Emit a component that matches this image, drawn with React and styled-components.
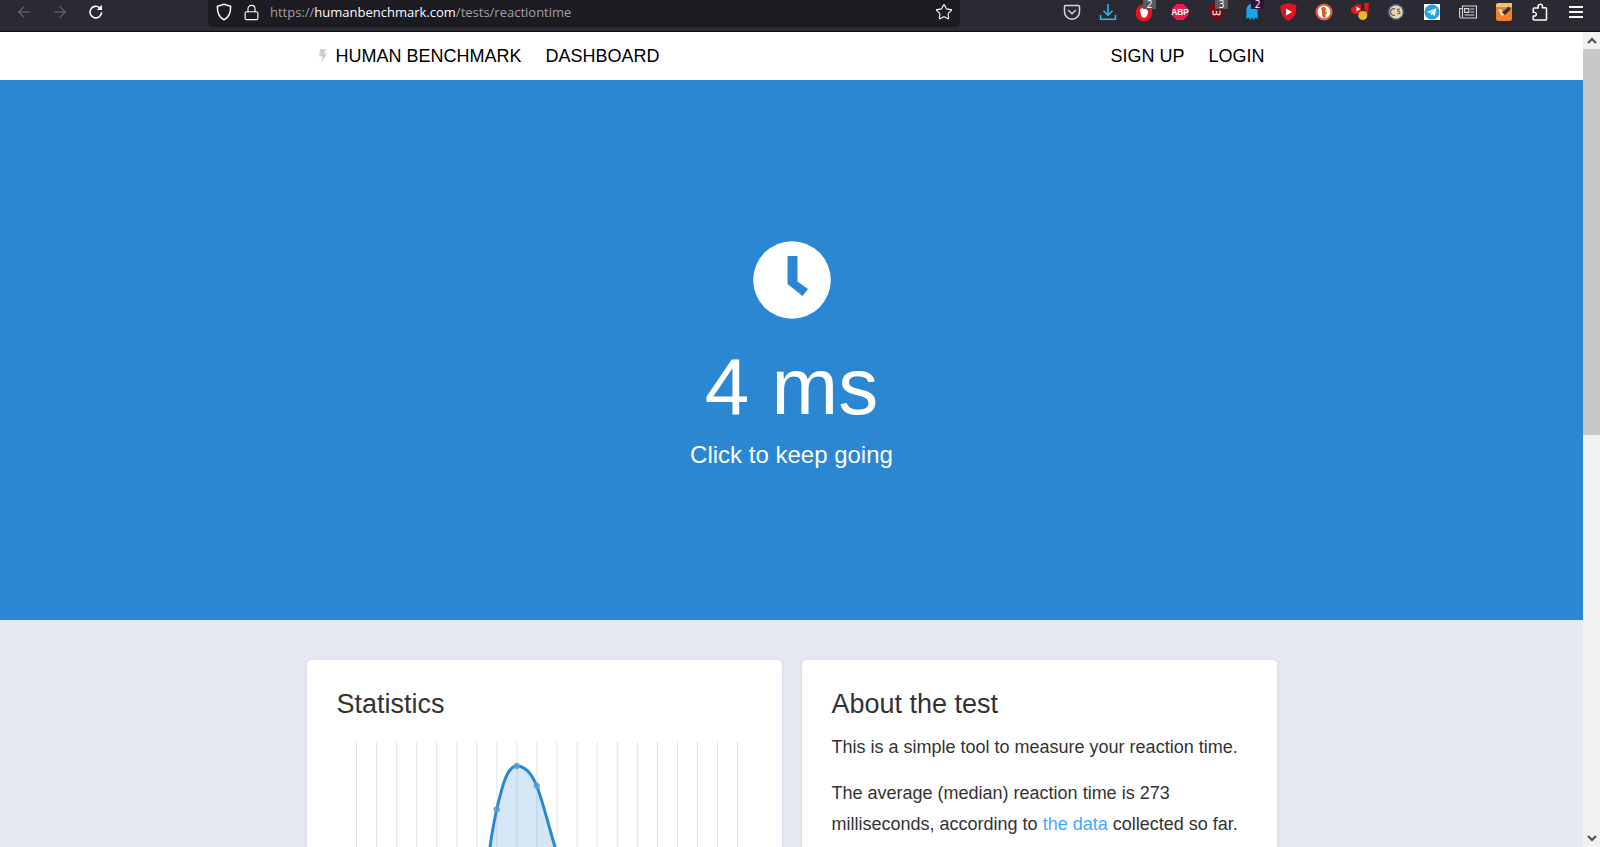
import React from 'react'
import styled, { createGlobalStyle } from 'styled-components'
import { ArrowLeft, ArrowRight, Lock, Star } from 'lucide-react'

const GlobalStyle = createGlobalStyle`
  html, body {
    margin: 0;
    padding: 0;
    height: 100%;
    overflow: hidden;
  }
  body {
    font-family: "Liberation Sans", Arial, sans-serif;
    color: #333;
    background: #e6e8f4;
  }
`

const gridLines = Array.from({ length: 20 }, (_, i) => 19.5 + i * 20.06)
const curve =
  'M125,290 C135,220 146,150 153,105 C155,90 157,80 159.7,67.3 C165,45 170,24 179.7,24 C188,24 194,30 199.7,43.7 C206,60 212,85 218,105 C224,125 232,160 240,190 C250,225 262,262 275,290'

const App = () => {
  return (
    <Screen>
      <GlobalStyle />
      <BrowserBar>
        <NavButton $dim><ArrowLeft size={18} strokeWidth={1.4} /></NavButton>
        <NavButton $dim><ArrowRight size={18} strokeWidth={1.4} /></NavButton>
        <NavButton>
          <svg width='18' height='18' viewBox='0 0 18 18' fill='none' stroke='#fbfbfe' strokeWidth='1.6'>
            <path d='M14.6 9.4a5.8 5.8 0 1 1-1.9-4.6L14.6 6.6' />
            <path d='M15 1.8v5.2h-5.2z' fill='#fbfbfe' stroke='none' />
          </svg>
        </NavButton>
        <UrlBar>
          <ShieldIcon viewBox='0 0 16 18' fill='none' stroke='#fbfbfe' strokeWidth='1.5'>
            <path d='M8 1.2 14.6 3.4C14.8 9.5 13 14.4 8 16.8 3 14.4 1.2 9.5 1.4 3.4z' />
          </ShieldIcon>
          <LockSlot><Lock size={17} strokeWidth={1.6} color='#fbfbfe' /></LockSlot>
          <UrlText>
            https://<strong>humanbenchmark.com</strong>/tests/reactiontime
          </UrlText>
          <StarSlot><Star size={18} strokeWidth={1.5} color='#fbfbfe' /></StarSlot>
        </UrlBar>
        <Extensions>
          <ExtSlot>
            <svg width='18' height='18' viewBox='0 0 18 18' fill='none' stroke='#d8d8dc' strokeWidth='1.5'>
              <path d='M2.5 2.5h13a1.2 1.2 0 0 1 1 1.2v5a7.5 7.5 0 0 1-15 0v-5a1.2 1.2 0 0 1 1-1.2z' />
              <path d='M5.5 7.5 9 10.8l3.5-3.3' strokeLinecap='round' />
            </svg>
          </ExtSlot>
          <ExtSlot>
            <svg width='18' height='18' viewBox='0 0 18 18' fill='none' stroke='#1fc5e6' strokeWidth='1.5'>
              <path d='M9 1v11M4.5 7.8 9 12.2l4.5-4.4M1.5 12v4.3h15V12' />
            </svg>
          </ExtSlot>
          <ExtSlot>
            <svg width='18' height='20' viewBox='0 0 18 20'>
              <circle cx='9' cy='11' r='8.4' fill='#e8141c' />
              <path d='M5 8l1 5c.6 2.6 3.6 3.8 5.6 1.4 1-1.3 1.4-3.4 1.4-5.4L11 7 9.5 5.5 7 6z' fill='#fff' />
            </svg>
            <Badge $bg='#5b5b5b'>2</Badge>
          </ExtSlot>
          <ExtSlot>
            <svg width='18' height='18' viewBox='0 0 18 18'>
              <path d='M5.4 1h7.2L17 5.4v7.2L12.6 17H5.4L1 12.6V5.4z' fill='#ec1c4a' />
              <AbpText x='9' y='12'>ABP</AbpText>
            </svg>
          </ExtSlot>
          <ExtSlot>
            <svg width='17' height='20' viewBox='0 0 17 20'>
              <path d='M8.5 1 16 3.4C16.4 11 14 16.6 8.5 19 3 16.6.6 11 1 3.4z' fill='#7c0a12' />
              <path d='M5 8.5v3.2c0 1.4 2.4 1.4 3.5 0 1.1 1.4 3.5 1.4 3.5 0V8.5M8.5 9v2.6' fill='none' stroke='#f3d2d2' strokeWidth='1.3' />
            </svg>
            <Badge $bg='#5b5b5b'>3</Badge>
          </ExtSlot>
          <ExtSlot>
            <svg width='14' height='20' viewBox='0 0 14 20'>
              <path d='M7 2C3 2 1.4 5.5 1.4 9v8l2.2-1.6L5.4 18 7 15.6 8.6 18l1.8-2.6 2.2 1.6V9C12.6 5.5 11 2 7 2z' fill='#14a8ec' />
            </svg>
            <Badge $bg='#35103f'>2</Badge>
          </ExtSlot>
          <ExtSlot>
            <svg width='17' height='20' viewBox='0 0 17 20'>
              <path d='M8.5 1 16.4 3.4C16.8 11 14 16.6 8.5 19 3 16.6.2 11 .6 3.4z' fill='#e2131e' />
              <path d='M6 6.4 12.2 10 6 13.6z' fill='#fff' />
            </svg>
          </ExtSlot>
          <ExtSlot>
            <svg width='18' height='18' viewBox='0 0 18 18'>
              <circle cx='9' cy='9' r='8.6' fill='#de5833' />
              <circle cx='9' cy='9' r='6.4' fill='#fff' />
              <path d='M6 5c2-1.6 4.4-1 5 .8l-.4 9.2c-2.4 0-3.6-1-3.6-3.4C7 9.5 7.2 7 6 5z' fill='#de5833' />
              <path d='M9 9.8l3-.8v1.8l-3 .2z' fill='#4cba3c' />
              <circle cx='11.2' cy='7.4' r='1.1' fill='#fddb1f' />
            </svg>
          </ExtSlot>
          <ExtSlot>
            <svg width='20' height='20' viewBox='0 0 20 20'>
              <path d='M1 6.5 6 2.5h5v9.5H4L1 9z' fill='#e8141c' />
              <path d='M14 1h5l-1 11h-3z' fill='#e8141c' />
              <path d='M6.5 4.6 10.4 7l-3.9 2.4z' fill='#fff' />
              <circle cx='12.8' cy='13.5' r='4.5' fill='#f3b71d' />
            </svg>
          </ExtSlot>
          <ExtSlot>
            <svg width='18' height='18' viewBox='0 0 18 18'>
              <circle cx='9' cy='9' r='8.4' fill='#35506a' />
              <circle cx='9' cy='9' r='6.8' fill='#e5d6b6' />
              <path d='M8 5.8a3.4 3.4 0 1 0 0 6.4' fill='none' stroke='#6a5b3c' strokeWidth='1.3' />
              <path d='M13 6.4c-2-1-3.2.2-2 1.4l1.4 1c1.2 1.2 0 2.6-2 1.6' fill='none' stroke='#6a5b3c' strokeWidth='1.1' />
            </svg>
          </ExtSlot>
          <ExtSlot>
            <svg width='16' height='16' viewBox='0 0 16 16'>
              <rect width='16' height='16' fill='#fff' />
              <circle cx='8' cy='8' r='7.6' fill='#2aa1da' />
              <path d='M3 8 12.4 4.2 10.8 12 8.2 10 7 11.4 6.6 9.2 10.6 5.8 5.4 9z' fill='#fff' />
            </svg>
          </ExtSlot>
          <ExtSlot>
            <svg width='18' height='16' viewBox='0 0 18 16' fill='none' stroke='#d8d8dc' strokeWidth='1.1'>
              <path d='M3.5 2h14v12H2a1.4 1.4 0 0 1-1.4-1.4V4.5H3.5z' />
              <path d='M3.5 4.5V13' />
              <path d='M5.6 4.6h4.2v3.8H5.6zM11.4 5h4M11.4 8h4M5.6 11h9.8' />
            </svg>
          </ExtSlot>
          <ExtSlot>
            <svg width='16' height='18' viewBox='0 0 16 18'>
              <rect width='16' height='18' rx='2.5' fill='#f0812d' />
              <path d='M0 4h16V0H2.5A2.5 2.5 0 0 0 0 2.5z' fill='#f5c06a' />
              <path d='M2 7l4 6 2-1.5-3-5.5z' fill='#f8e4d2' />
              <path d='M6 9.5 12.5 3.6 15 6 9 12z' fill='#3a3026' />
            </svg>
          </ExtSlot>
          <ExtSlot>
            <svg width='16' height='18' viewBox='0 0 16 18' fill='none' stroke='#fbfbfe' strokeWidth='1.5' strokeLinejoin='round'>
              <path d='M6 3.8C5.6 1.2 9.6.4 10.4 2.6c.3.9 0 1.6-.2 2.2h3.3c.6 0 1 .4 1 1v10.4c0 .5-.4.9-1 .9H2.2c-.6 0-1-.4-1-1V13c1.2.2 3 .2 3.2-1.6.2-1.8-2-2.4-3.2-2V6c0-.6.4-1.1 1-1.1h4.2c0-.4-.3-.7-.4-1.1z' />
            </svg>
          </ExtSlot>
          <ExtSlot>
            <MenuLines><i /><i /><i /></MenuLines>
          </ExtSlot>
        </Extensions>
      </BrowserBar>
      <Viewport>
        <Page>
          <TopNav>
            <NavInner>
              <NavGroup>
                <BrandLink>
                  <svg width='8' height='14' viewBox='0 0 8 14'>
                    <path d='M1 0h6L5.4 4.8H8L2.2 14l1.2-6.6H0z' fill='#cfcfcf' />
                  </svg>
                  HUMAN BENCHMARK
                </BrandLink>
                <NavLink>DASHBOARD</NavLink>
              </NavGroup>
              <NavGroup>
                <NavLink>SIGN UP</NavLink>
                <NavLink>LOGIN</NavLink>
              </NavGroup>
            </NavInner>
          </TopNav>
          <Hero>
            <svg width='78' height='78' viewBox='0 0 78 78'>
              <circle cx='39' cy='39' r='38.8' fill='#fff' />
              <path d='M34.5 16a1 1 0 0 1 1-1h8a1 1 0 0 1 1 1v24.5L55 48l-5.5 7-15-12z' fill='#2b87d1' />
            </svg>
            <Result>4 ms</Result>
            <HeroHint>Click to keep going</HeroHint>
          </Hero>
          <Cards>
            <Card>
              <CardTitle>Statistics</CardTitle>
              <Chart width='415' height='300' viewBox='0 0 415 300'>
                {gridLines.map((x) => (
                  <line key={x} x1={x} x2={x} y1='0' y2='300' stroke='#e2e2e2' strokeWidth='1' />
                ))}
                <path d={curve} fill='rgba(43,135,209,0.2)' stroke='#2b87d1' strokeWidth='3' />
                {[[159.7, 67.3], [179.7, 24], [199.7, 43.7]].map(([cx, cy]) => (
                  <circle key={cx} cx={cx} cy={cy} r='2.8' fill='rgba(90,163,220,0.7)' stroke='#5aa3dc' strokeWidth='1' />
                ))}
              </Chart>
            </Card>
            <Card>
              <CardTitle>About the test</CardTitle>
              <Text>This is a simple tool to measure your reaction time.</Text>
              <Text>
                The average (median) reaction time is 273 milliseconds, according to{' '}
                <DataLink>the data</DataLink> collected so far.
              </Text>
              <Text>
                In addition to measuring your reaction time, this test is affected by the latency of your computer and monitor.
              </Text>
            </Card>
          </Cards>
        </Page>
        <Scrollbar>
          <ScrollButton>
            <svg width='10' height='7' viewBox='0 0 10 7' fill='none' stroke='#505050' strokeWidth='2.2'>
              <path d='M1 6l4-4 4 4' />
            </svg>
          </ScrollButton>
          <ScrollThumb />
          <ScrollTrack />
          <ScrollButton>
            <svg width='10' height='7' viewBox='0 0 10 7' fill='none' stroke='#505050' strokeWidth='2.2'>
              <path d='M1 1l4 4 4-4' />
            </svg>
          </ScrollButton>
        </Scrollbar>
      </Viewport>
    </Screen>
  )
}

const Screen = styled.div`
  height: 100vh;
  display: flex;
  flex-direction: column;
  overflow: hidden;
`
const BrowserBar = styled.header`
  flex: none;
  height: 31px;
  box-sizing: content-box;
  display: flex;
  align-items: flex-start;
  padding-left: 6px;
  padding-right: 6px;
  background: #2b2a33;
  border-bottom: 1px solid #0c0c0d;
`
const NavButton = styled.div`
  width: 36px;
  height: 24px;
  display: flex;
  align-items: center;
  justify-content: center;
  color: ${(props) => (props.$dim ? '#77767c' : '#fbfbfe')};
`
const UrlBar = styled.div`
  width: 752px;
  height: 27px;
  margin-left: 94px;
  padding: 0 0 3px 8px;
  box-sizing: border-box;
  display: flex;
  align-items: center;
  background: #1c1b22;
  border-radius: 0 0 5px 5px;
`
const ShieldIcon = styled.svg`
  width: 16px;
  height: 18px;
  flex: none;
`
const LockSlot = styled.div`
  margin-left: 11px;
  display: flex;
`
const UrlText = styled.div`
  margin-left: 10px;
  font-family: "Open Sans", sans-serif;
  font-size: 13px;
  color: #a09fa6;
  strong {
    font-weight: 400;
    color: #fbfbfe;
  }
`
const StarSlot = styled.div`
  margin-left: auto;
  margin-right: 7px;
  display: flex;
`
const Extensions = styled.div`
  margin-left: auto;
  display: flex;
`
const ExtSlot = styled.div`
  position: relative;
  width: 36px;
  height: 24px;
  display: flex;
  align-items: center;
  justify-content: center;
`
const Badge = styled.span`
  position: absolute;
  top: 0;
  left: 17px;
  width: 13px;
  height: 9px;
  font-family: "Open Sans", sans-serif;
  font-size: 10px;
  line-height: 9px;
  text-align: center;
  color: #fff;
  background: ${(props) => props.$bg};
`
const AbpText = styled.text`
  font-family: "Liberation Sans", sans-serif;
  font-size: 8.4px;
  font-weight: 700;
  text-anchor: middle;
  fill: #fff;
`
const MenuLines = styled.div`
  width: 14px;
  display: flex;
  flex-direction: column;
  gap: 3px;
  i {
    display: block;
    height: 2px;
    background: #fbfbfe;
  }
`
const Viewport = styled.div`
  flex: 1;
  min-height: 0;
  display: flex;
`
const Page = styled.main`
  flex: 1;
  min-width: 0;
  overflow: hidden;
  background: #e6e8f4;
`
const TopNav = styled.nav`
  height: 48px;
  background: #fff;
`
const NavInner = styled.div`
  width: 970px;
  height: 100%;
  margin: 0 auto;
  display: flex;
  justify-content: space-between;
`
const NavGroup = styled.div`
  display: flex;
`
const NavLink = styled.a`
  padding: 0 12px;
  font-size: 18px;
  line-height: 48px;
  color: #000;
`
const BrandLink = styled(NavLink)`
  display: flex;
  align-items: center;
  gap: 9px;
`
const Hero = styled.section`
  height: 540px;
  box-sizing: border-box;
  padding-top: 161px;
  display: flex;
  flex-direction: column;
  align-items: center;
  background: #2b87d1;
  color: #fff;
`
const Result = styled.h1`
  margin: 24px 0 0;
  font-size: 80px;
  font-weight: 400;
  line-height: 88px;
`
const HeroHint = styled.p`
  margin: 7px 0 0;
  font-size: 24px;
  line-height: 34px;
`
const Cards = styled.div`
  width: 970px;
  margin: 40px auto 0;
  display: grid;
  grid-template-columns: 475px 475px;
  gap: 20px;
`
const Card = styled.article`
  padding: 29px 30px 30px;
  border-radius: 5px;
  background: #fff;
  box-shadow: 0 1px 4px rgba(120, 125, 170, 0.2);
`
const CardTitle = styled.h2`
  margin: 0 0 13px;
  font-size: 27px;
  font-weight: 400;
  line-height: 30px;
  color: #333;
`
const Chart = styled.svg`
  display: block;
  margin-top: 23px;
`
const Text = styled.p`
  margin: 0 0 15px;
  font-size: 18px;
  line-height: 31px;
  color: #333;
`
const DataLink = styled.a`
  color: #44aaff;
`
const Scrollbar = styled.aside`
  flex: none;
  width: 17px;
  display: flex;
  flex-direction: column;
  background: #f1f1f1;
`
const ScrollButton = styled.div`
  flex: none;
  height: 17px;
  display: flex;
  align-items: center;
  justify-content: center;
`
const ScrollThumb = styled.div`
  flex: none;
  height: 386px;
  background: #c8c8c8;
`
const ScrollTrack = styled.div`
  flex: 1;
`

export default App
